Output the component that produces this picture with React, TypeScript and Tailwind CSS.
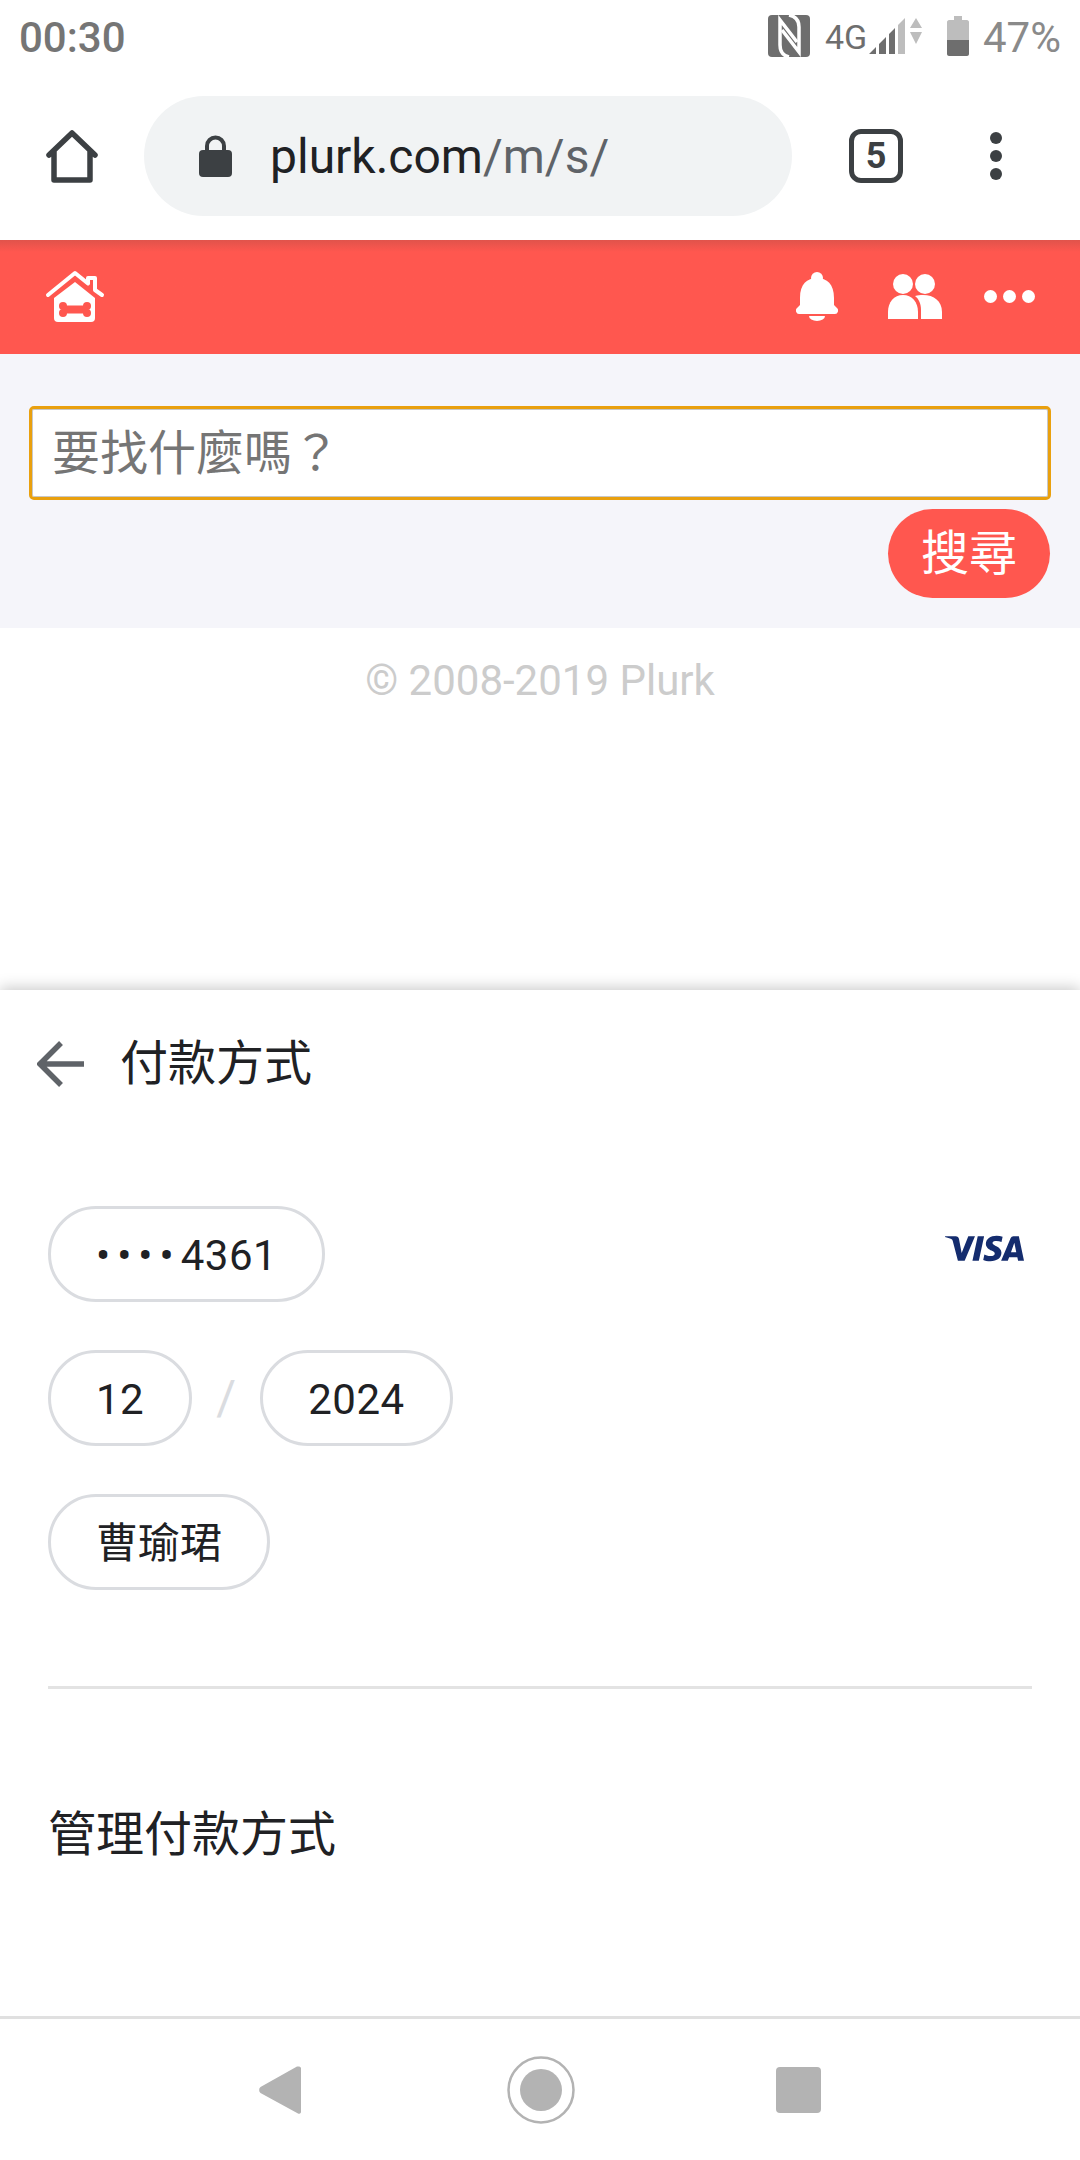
import type { ReactNode } from 'react';
import { SiVisa } from 'react-icons/si';

function StatusBar() {
  return (
    <div className="h-[72px] flex items-center justify-between pl-[19px] pr-[19px] text-[42px] text-[#757575]">
      <span className="leading-none font-medium pt-[3px]">00:30</span>
      <div className="flex items-center">
        {/* NFC */}
        <svg width="42" height="42" viewBox="0 0 42 42" className="mr-[15px]">
          <rect width="42" height="42" rx="4" fill="#6e6e6e" />
          <path d="M21 42Q12 40 12 30V5l17 22" fill="none" stroke="#fff" strokeWidth="3.500" />
          <path d="M21 0q10 2 10 12v25L14 15" fill="none" stroke="#fff" strokeWidth="3.500" />
        </svg>
        <span className="text-[34px] text-[#6e6e6e] leading-none w-[44px] pt-[1px]">4G</span>
        {/* signal */}
        <svg width="53" height="36" viewBox="0 0 53 36" className="mr-[25px]">
          <path d="M0 36l7-7v7zM10 36V26l7-7v17zM20 36V16l6-6v26z" fill="#6e6e6e" />
          <path d="M29 36V7l7-7v36z" fill="#bdbdbd" />
          <path d="M47 0l6 10H41zM41 14h12l-6 12z" fill="#bdbdbd" />
        </svg>
        {/* battery */}
        <svg width="22" height="40" viewBox="0 0 22 40" className="mr-[14px]">
          <path d="M7 0h8v4h5c1 0 2 1 2 2v18H0V6c0-1 1-2 2-2h5z" fill="#bdbdbd" />
          <path d="M0 24h22v14c0 1-1 2-2 2H2c-1 0-2-1-2-2z" fill="#6e6e6e" />
        </svg>
        <span className="leading-none text-[#8a8a8a] pt-[3px]">47%</span>
      </div>
    </div>
  );
}

function Toolbar() {
  return (
    <div className="h-[168px] flex items-center pl-[45px]">
      <svg width="54" height="54" viewBox="0 0 54 54" fill="none" className="mr-[45px]">
        <path d="M4 26L27 4l23 22M9 22v29h36V22" stroke="#3c4043" strokeWidth="5.500" strokeLinejoin="round" strokeLinecap="round" />
      </svg>
      <div className="w-[648px] h-[120px] rounded-full bg-[#f1f3f4] flex items-center pl-[55px]">
        <svg width="33" height="42" viewBox="0 0 33 42" className="mr-[38px]">
          <path d="M8 18v-7a8.500 8.500 0 0117 0v7" fill="none" stroke="#3c4043" strokeWidth="4" />
          <rect y="15" width="33" height="27" rx="4" fill="#3c4043" />
        </svg>
        <span className="text-[48px] text-[#202124] leading-none pt-[2px]">
          plurk.com<span className="text-[#5f6368]">/m/s/</span>
        </span>
      </div>
      <div className="ml-[57px] w-[54px] h-[54px] rounded-[12px] border-[5px] border-[#3c4043] flex items-center justify-center text-[36px] font-bold text-[#3c4043] leading-none">
        5
      </div>
      <div className="ml-[87px] flex flex-col gap-[6px]">
        <span className="w-[12px] h-[12px] rounded-full bg-[#3c4043]" />
        <span className="w-[12px] h-[12px] rounded-full bg-[#3c4043]" />
        <span className="w-[12px] h-[12px] rounded-full bg-[#3c4043]" />
      </div>
    </div>
  );
}

function PlurkHeader() {
  return (
    <div className="h-[114px] bg-[#ff574f] flex items-center pl-[45px] pr-[45px] bg-gradient-to-b from-[#e0534b] to-[#ff574f] to-[12px] pb-[2px]">
      {/* dog house */}
      <svg width="60" height="52" viewBox="0 0 60 52">
        <path d="M3 25L30 3l13 10.500V8h7v12l7 5" fill="none" stroke="#fff" strokeWidth="4" strokeLinecap="round" strokeLinejoin="round" />
        <path d="M30 12l20 16v20a4 4 0 01-4 4H13a4 4 0 01-4-4V28z" fill="#fff" />
        <g fill="#ff574f">
          <circle cx="18" cy="36" r="4" />
          <circle cx="18" cy="43" r="4" />
          <circle cx="42" cy="36" r="4" />
          <circle cx="42" cy="43" r="4" />
          <rect x="18" y="35.500" width="24" height="8" />
        </g>
      </svg>
      <div className="ml-auto flex items-center">
        <svg width="42" height="49" viewBox="0 0 42 49" className="mr-[50px]">
          <circle cx="21" cy="6" r="6" fill="#fff" />
          <path d="M4 26C4 12 11 6 21 6s17 6 17 20v7l3 3a3.500 3.500 0 01-2 6H3a3.500 3.500 0 01-2-6l3-3z" fill="#fff" />
          <path d="M13 44h16a8 5 0 01-16 0z" fill="#fff" />
        </svg>
        <svg width="54" height="45" viewBox="0 0 54 45" className="mr-[42px]">
          <circle cx="15" cy="10" r="10" fill="#fff" />
          <circle cx="37" cy="10" r="10" fill="#fff" />
          <path d="M0 45V38C0 28 6 21 15 21s15 7 15 17v7z" fill="#fff" />
          <path d="M33 45V36c0-6-2-11-6-14 3-1 5-1 8-1 11 0 19 6 19 17v7z" fill="#fff" />
        </svg>
        <div className="flex gap-[6px]">
          <span className="w-[13px] h-[13px] rounded-full bg-white" />
          <span className="w-[13px] h-[13px] rounded-full bg-white" />
          <span className="w-[13px] h-[13px] rounded-full bg-white" />
        </div>
      </div>
    </div>
  );
}

function SearchArea() {
  return (
    <div className="h-[274px] bg-[#f5f5fa] px-[29px] pt-[52px]">
      <input
        readOnly
        placeholder="要找什麼嗎？"
        className="w-full h-[94px] bg-white rounded-[5px] border-[3px] border-[#e9a00e] shadow-[inset_0_0_0_1px_#c8c8c8] px-[20px] text-[48px] placeholder:text-[#757575]"
      />
      <div className="flex justify-end mt-[9px] mr-[1px]">
        <button className="w-[162px] h-[89px] rounded-full bg-[#ff574f] text-white text-[48px] leading-none">
          搜尋
        </button>
      </div>
    </div>
  );
}

function Pill({ children }: { children: ReactNode }) {
  return (
    <div className="h-[96px] rounded-full border-[3px] border-[#dadce0] px-[45px] pt-[3px] flex items-center text-[42px] text-[#202124] leading-none">
      {children}
    </div>
  );
}

function PaymentSheet() {
  return (
    <div className="relative flex-1 bg-white shadow-[0_-2px_14px_rgba(0,0,0,0.22)] flex flex-col">
      <div className="h-[148px] flex items-center pl-[37px]">
        <svg width="48" height="48" viewBox="0 0 48 48" fill="none" className="mr-[35px]">
          <path d="M47 24H4M24 3L3 24l21 21" stroke="#5f6368" strokeWidth="5.500" />
        </svg>
        <span className="text-[48px] text-[#202124] leading-none">付款方式</span>
      </div>
      <div className="flex-1 px-[48px] pt-[68px]">
        <div className="flex items-start justify-between">
          <Pill>
            <span className="tracking-[7px]">••••</span>
            <span className="tracking-[0.5px]">4361</span>
          </Pill>
          <SiVisa className="text-[#142c6e] mt-[3px] mr-[8px]" size={79} />
        </div>
        <div className="flex items-center mt-[48px]">
          <Pill>
            <span className="tracking-[0.5px]">12</span>
          </Pill>
          <span className="w-[68px] text-center text-[48px] text-[#dadce0] leading-none">/</span>
          <Pill>
            <span className="tracking-[0.5px]">2024</span>
          </Pill>
        </div>
        <div className="flex mt-[48px]">
          <Pill>曹瑜珺</Pill>
        </div>
        <div className="h-[3px] bg-[#e3e3e3] mt-[96px]" />
        <div className="mt-[122px] text-[48px] text-[#202124] leading-none">管理付款方式</div>
      </div>
      <div className="h-[3px] bg-[#e0e0e0]" />
      <div className="h-[141px] flex items-center justify-center">
        <svg width="42" height="50" viewBox="0 0 42 50" className="mr-[206px]">
          <path d="M40 1.500a2 2 0 012 1.500v44a2 2 0 01-3 1.500L1.500 28a4 4 0 010-6L38 1.500z" fill="#b3b3b3" />
        </svg>
        <svg width="68" height="68" viewBox="0 0 68 68" className="mr-[201px]">
          <circle cx="34" cy="34" r="32.500" fill="none" stroke="#b3b3b3" strokeWidth="2.500" />
          <circle cx="34" cy="34" r="21" fill="#b3b3b3" />
        </svg>
        <div className="w-[45px] h-[46px] rounded-[4px] bg-[#b3b3b3]" />
      </div>
    </div>
  );
}

export default function App() {
  return (
    <div className="w-[1080px] h-[2160px] flex flex-col bg-white font-['Roboto','Noto_Sans_CJK_TC',sans-serif]">
      <StatusBar />
      <Toolbar />
      <PlurkHeader />
      <SearchArea />
      <div className="h-[362px] pt-[32px] text-center text-[42px] text-[#cccccc] leading-none">
        © 2008-2019 Plurk
      </div>
      <PaymentSheet />
    </div>
  );
}
